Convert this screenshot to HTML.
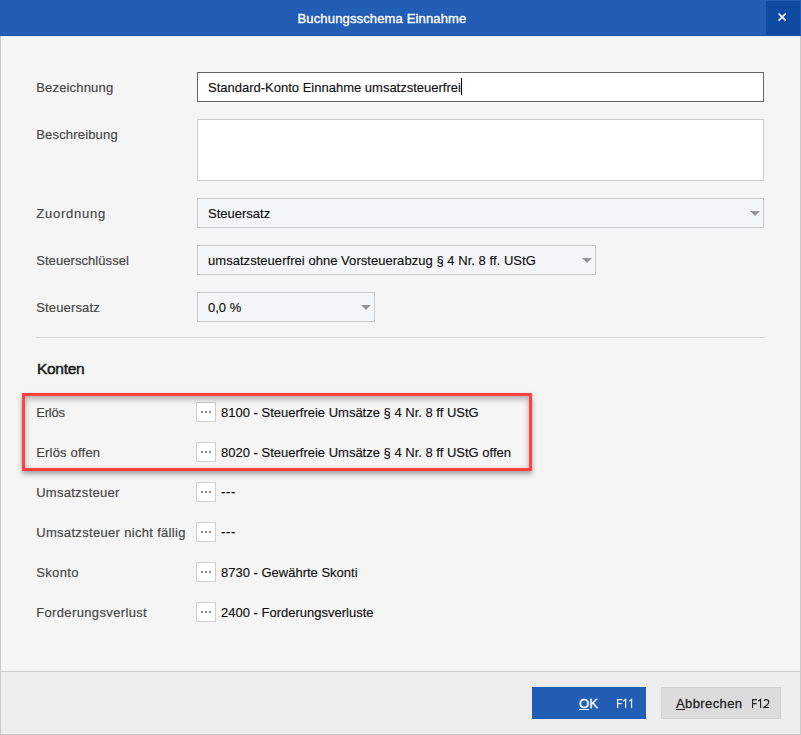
<!DOCTYPE html>
<html><head><meta charset="utf-8">
<style>
*{margin:0;padding:0;box-sizing:border-box}
html,body{width:801px;height:735px;overflow:hidden;background:#f5f5f5}
body{position:relative;font-family:"Liberation Sans",sans-serif;font-size:13px}
.a{position:absolute}
#title{left:0;top:0;width:801px;height:36px;background:#225db6;border-bottom:1px solid #1a52aa}
#ttl{left:-1px;top:1px;width:766px;height:35px;line-height:36px;text-align:center;color:#fff;font-size:13px;-webkit-text-stroke:0.35px #fff;letter-spacing:0.15px}
#close{left:766px;top:1px;width:34px;height:34px;background:#0f4aa2}
#lb{left:0;top:36px;width:1px;height:699px;background:#c9c9c9}
#rb{left:800px;top:36px;width:1px;height:699px;background:#c9c9c9}
#bb{left:0;top:734px;width:801px;height:1px;background:#c9c9c9}
#footer{left:1px;top:671px;width:799px;height:63px;background:#eeeeee;border-top:1px solid #cfcfcf}
.lbl{left:36.2px;color:#484848;-webkit-text-stroke:0.2px #484848;line-height:15px;white-space:pre}
.box{left:197px;height:30px;border:1px solid #cbcbcb;background:#fff}
.cmb{background:#f4f5f7}
.val{color:#111;-webkit-text-stroke:0.15px #111;line-height:15px;white-space:pre}
.arr{width:0;height:0;border-left:4.5px solid transparent;border-right:4.5px solid transparent;border-top:5px solid #8f8f8f}
.eb{left:196px;width:20px;height:20px;border:1px solid #cdcdcd;background:#fff}
.dot{width:2px;height:2px;background:#8d8d8d;top:8px}
</style></head><body>
<div class="a" id="title"></div>
<div class="a" id="ttl">Buchungsschema Einnahme</div>
<div class="a" id="close"><svg width="34" height="34" style="position:absolute;left:0;top:0"><path d="M12.6 12.5 L19.7 19.6 M19.7 12.5 L12.6 19.6" stroke="#fff" stroke-width="1.7"/></svg></div>
<div class="a" id="lb"></div><div class="a" id="rb"></div>
<div class="a" id="footer"></div>
<div class="a" id="bb"></div>

<!-- rows -->
<div class="a lbl" style="top:80px;letter-spacing:0.18px">Bezeichnung</div>
<div class="a box" style="top:72px;width:567px;border-color:#666"></div>
<div class="a val" style="left:208px;top:80px">Standard-Konto Einnahme umsatzsteuerfrei</div>
<div class="a" style="left:461px;top:78px;width:1px;height:17px;background:#000"></div>

<div class="a lbl" style="top:127px;letter-spacing:0.18px">Beschreibung</div>
<div class="a box" style="top:119px;width:567px;height:62px"></div>

<div class="a lbl" style="top:206px;letter-spacing:0.78px">Zuordnung</div>
<div class="a box cmb" style="top:198px;width:567px"></div>
<div class="a val" style="left:208px;top:206px">Steuersatz</div>
<svg class="a" style="left:749px;top:211px" width="12" height="8"><polygon points="1,1 11,1 6,6" fill="#fff"/><polygon points="1,0 11,0 6,5" fill="#959595"/></svg>

<div class="a lbl" style="top:253px;letter-spacing:0.07px">Steuerschlüssel</div>
<div class="a box cmb" style="top:245px;width:399px"></div>
<div class="a val" style="left:208px;top:253px;letter-spacing:0.04px">umsatzsteuerfrei ohne Vorsteuerabzug § 4 Nr. 8 ff. UStG</div>
<svg class="a" style="left:581px;top:258px" width="12" height="8"><polygon points="1,1 11,1 6,6" fill="#fff"/><polygon points="1,0 11,0 6,5" fill="#959595"/></svg>

<div class="a lbl" style="top:300px;letter-spacing:0.15px">Steuersatz</div>
<div class="a box cmb" style="top:292px;width:178px"></div>
<div class="a val" style="left:208px;top:300px">0,0 %</div>
<svg class="a" style="left:360px;top:305px" width="12" height="8"><polygon points="1,1 11,1 6,6" fill="#fff"/><polygon points="1,0 11,0 6,5" fill="#959595"/></svg>

<div class="a" style="left:36px;top:337px;width:729px;height:1px;background:#d6d6d6"></div>
<div class="a" style="left:37px;top:360px;font-size:15.5px;color:#1b1b1b;-webkit-text-stroke:0.5px #1b1b1b;letter-spacing:-0.3px;line-height:18px">Konten</div>

<!-- konten rows -->
<div class="a lbl" style="top:405px;letter-spacing:-0.2px">Erlös</div>
<div class="a eb" style="top:402px"><div class="a dot" style="left:4px"></div><div class="a dot" style="left:8px"></div><div class="a dot" style="left:12px"></div></div>
<div class="a val" style="left:221px;top:405px">8100 - Steuerfreie Umsätze § 4 Nr. 8 ff UStG</div>

<div class="a lbl" style="top:445px;letter-spacing:0.2px">Erlös offen</div>
<div class="a eb" style="top:442px"><div class="a dot" style="left:4px"></div><div class="a dot" style="left:8px"></div><div class="a dot" style="left:12px"></div></div>
<div class="a val" style="left:221px;top:445px">8020 - Steuerfreie Umsätze § 4 Nr. 8 ff UStG offen</div>

<div class="a lbl" style="top:485px;letter-spacing:0.27px">Umsatzsteuer</div>
<div class="a eb" style="top:482px"><div class="a dot" style="left:4px"></div><div class="a dot" style="left:8px"></div><div class="a dot" style="left:12px"></div></div>
<div class="a val" style="left:221px;top:484px;letter-spacing:0.7px">---</div>

<div class="a lbl" style="top:525px;letter-spacing:0.32px">Umsatzsteuer nicht fällig</div>
<div class="a eb" style="top:522px"><div class="a dot" style="left:4px"></div><div class="a dot" style="left:8px"></div><div class="a dot" style="left:12px"></div></div>
<div class="a val" style="left:221px;top:524px;letter-spacing:0.7px">---</div>

<div class="a lbl" style="top:565px;letter-spacing:0.36px">Skonto</div>
<div class="a eb" style="top:562px"><div class="a dot" style="left:4px"></div><div class="a dot" style="left:8px"></div><div class="a dot" style="left:12px"></div></div>
<div class="a val" style="left:221px;top:565px">8730 - Gewährte Skonti</div>

<div class="a lbl" style="top:605px;letter-spacing:0.36px">Forderungsverlust</div>
<div class="a eb" style="top:602px"><div class="a dot" style="left:4px"></div><div class="a dot" style="left:8px"></div><div class="a dot" style="left:12px"></div></div>
<div class="a val" style="left:221px;top:605px">2400 - Forderungsverluste</div>

<!-- red box -->
<div class="a" style="left:22px;top:393px;width:510px;height:78px;border:3px solid #ff4040;box-shadow:0 3px 5px rgba(0,0,0,.35), inset 0 3px 6px rgba(0,0,0,.3)"></div>

<!-- buttons -->
<div class="a" style="left:532px;top:687px;width:114px;height:32px;background:#225db6"></div>
<div class="a" style="left:579px;top:696px;color:#fff;-webkit-text-stroke:0.3px #fff;line-height:15px"><u>O</u>K</div>
<svg class="a" style="left:610px;top:694px" width="30" height="18" fill="none" stroke="#fff" stroke-width="1.15"><path d="M7.6 14 V5.6 H12.2 M7.6 9.6 H11.8"/><path d="M15.6 14 V5.5 L13.3 7.2"/><path d="M21.6 14 V5.5 L19.3 7.2"/></svg>
<div class="a" style="left:661px;top:687px;width:120px;height:32px;background:#dcdcdc;border:1px solid #d0d0d0"></div>
<div class="a" style="left:676px;top:696px;color:#222;-webkit-text-stroke:0.3px #222;line-height:15px;letter-spacing:0.4px"><u>A</u>bbrechen</div>
<svg class="a" style="left:745px;top:694px" width="30" height="18" fill="none" stroke="#222" stroke-width="1.15"><path d="M7.6 14 V5.6 H12 M7.6 9.6 H11.6"/><path d="M15.6 14 V5.5 L13.3 7.2"/><path d="M19 6.5 Q19.9 5.6 21.3 5.6 Q23.8 5.7 23.8 7.8 Q23.8 9.4 21.7 11.2 L18.9 13.45 H24.2"/></svg>
</body></html>
